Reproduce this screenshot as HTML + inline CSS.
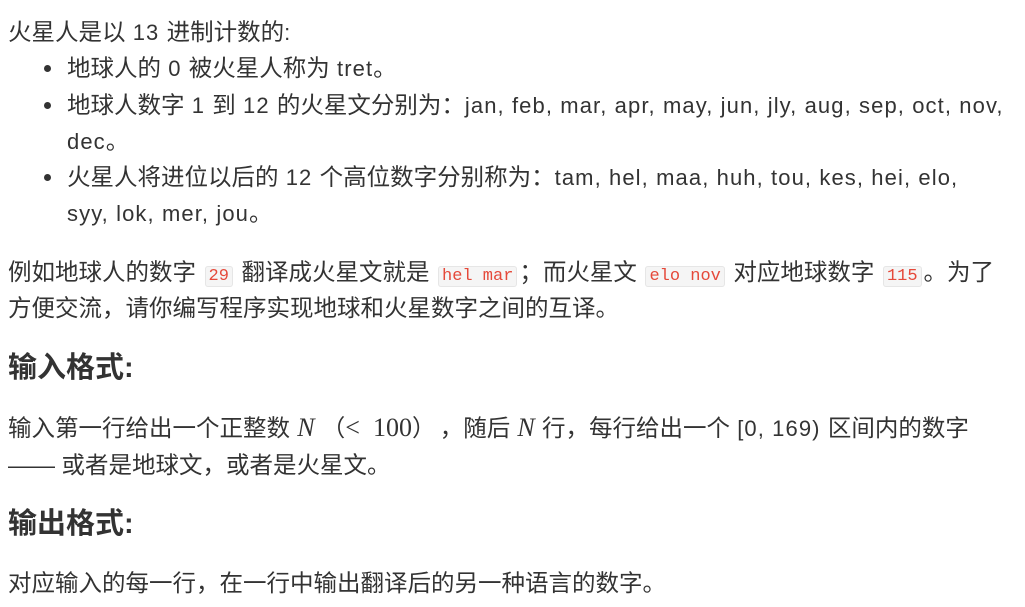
<!DOCTYPE html>
<html><head><meta charset="utf-8"><style>
body{margin:0;width:1025px;height:607px;background:#fff;overflow:hidden;font-family:"Liberation Sans","Noto Sans CJK SC",sans-serif;color:#333;font-size:22px;letter-spacing:1.1px}
.l{position:absolute;left:8px;white-space:nowrap;line-height:26px}
.z{font-size:23.5px;letter-spacing:0}
.b{left:67px}
.dot{position:absolute;left:44px;width:7px;height:7px;border-radius:50%;background:#333}
code{font-family:"Liberation Mono",monospace;font-size:17px;color:#e5493a;background:#f5f5f5;border:1px solid #e6e6e6;border-radius:3px;padding:0 3px;margin:0 2px;letter-spacing:0}
h{font-size:29px;font-weight:bold;letter-spacing:0}
i{font-family:"Liberation Serif",serif;font-size:26px;letter-spacing:0}
.m{font-family:"Liberation Serif",serif;font-size:26px;letter-spacing:0}
</style></head><body>
<div class="l" style="top:19px"><span class="z">火星人是以</span> 13 <span class="z">进制计数的</span>:</div>
<div class="dot" style="top:65px"></div><div class="l b" style="top:55px"><span class="z">地球人的</span> 0 <span class="z">被火星人称为</span> tret<span class="z">。</span></div>
<div class="dot" style="top:102px"></div><div class="l b" style="top:92px"><span class="z">地球人数字</span> 1 <span class="z">到</span> 12 <span class="z">的火星文分别为：</span>jan, feb, mar, apr, may, jun, jly, aug, sep, oct, nov,</div>
<div class="l b" style="top:128px">dec<span class="z">。</span></div>
<div class="dot" style="top:174px"></div><div class="l b" style="top:164px"><span class="z">火星人将进位以后的</span> 12 <span class="z">个高位数字分别称为：</span>tam, hel, maa, huh, tou, kes, hei, elo,</div>
<div class="l b" style="top:200px">syy, lok, mer, jou<span class="z">。</span></div>
<div class="l z" style="top:259px">例如地球人的数字 <code>29</code> 翻译成火星文就是 <code>hel mar</code>；而火星文 <code>elo nov</code> 对应地球数字 <code>115</code>。为了</div>
<div class="l z" style="top:295px">方便交流，请你编写程序实现地球和火星数字之间的互译。</div>
<div class="l" style="top:355px"><h>输入格式:</h></div>
<div class="l" style="top:415px"><span class="z">输入第一行给出一个正整数</span> <i>N</i> <span class="z">（</span><span class="m">&lt;&nbsp; 100</span><span class="z" style="margin-right:16px">）</span><span class="z">，随后</span> <i>N</i> <span class="z">行，每行给出一个</span> [0, 169) <span class="z">区间内的数字</span></div>
<div class="l z" style="top:452px">—— 或者是地球文，或者是火星文。</div>
<div class="l" style="top:511px"><h>输出格式:</h></div>
<div class="l z" style="top:570px">对应输入的每一行，在一行中输出翻译后的另一种语言的数字。</div>
</body></html>
